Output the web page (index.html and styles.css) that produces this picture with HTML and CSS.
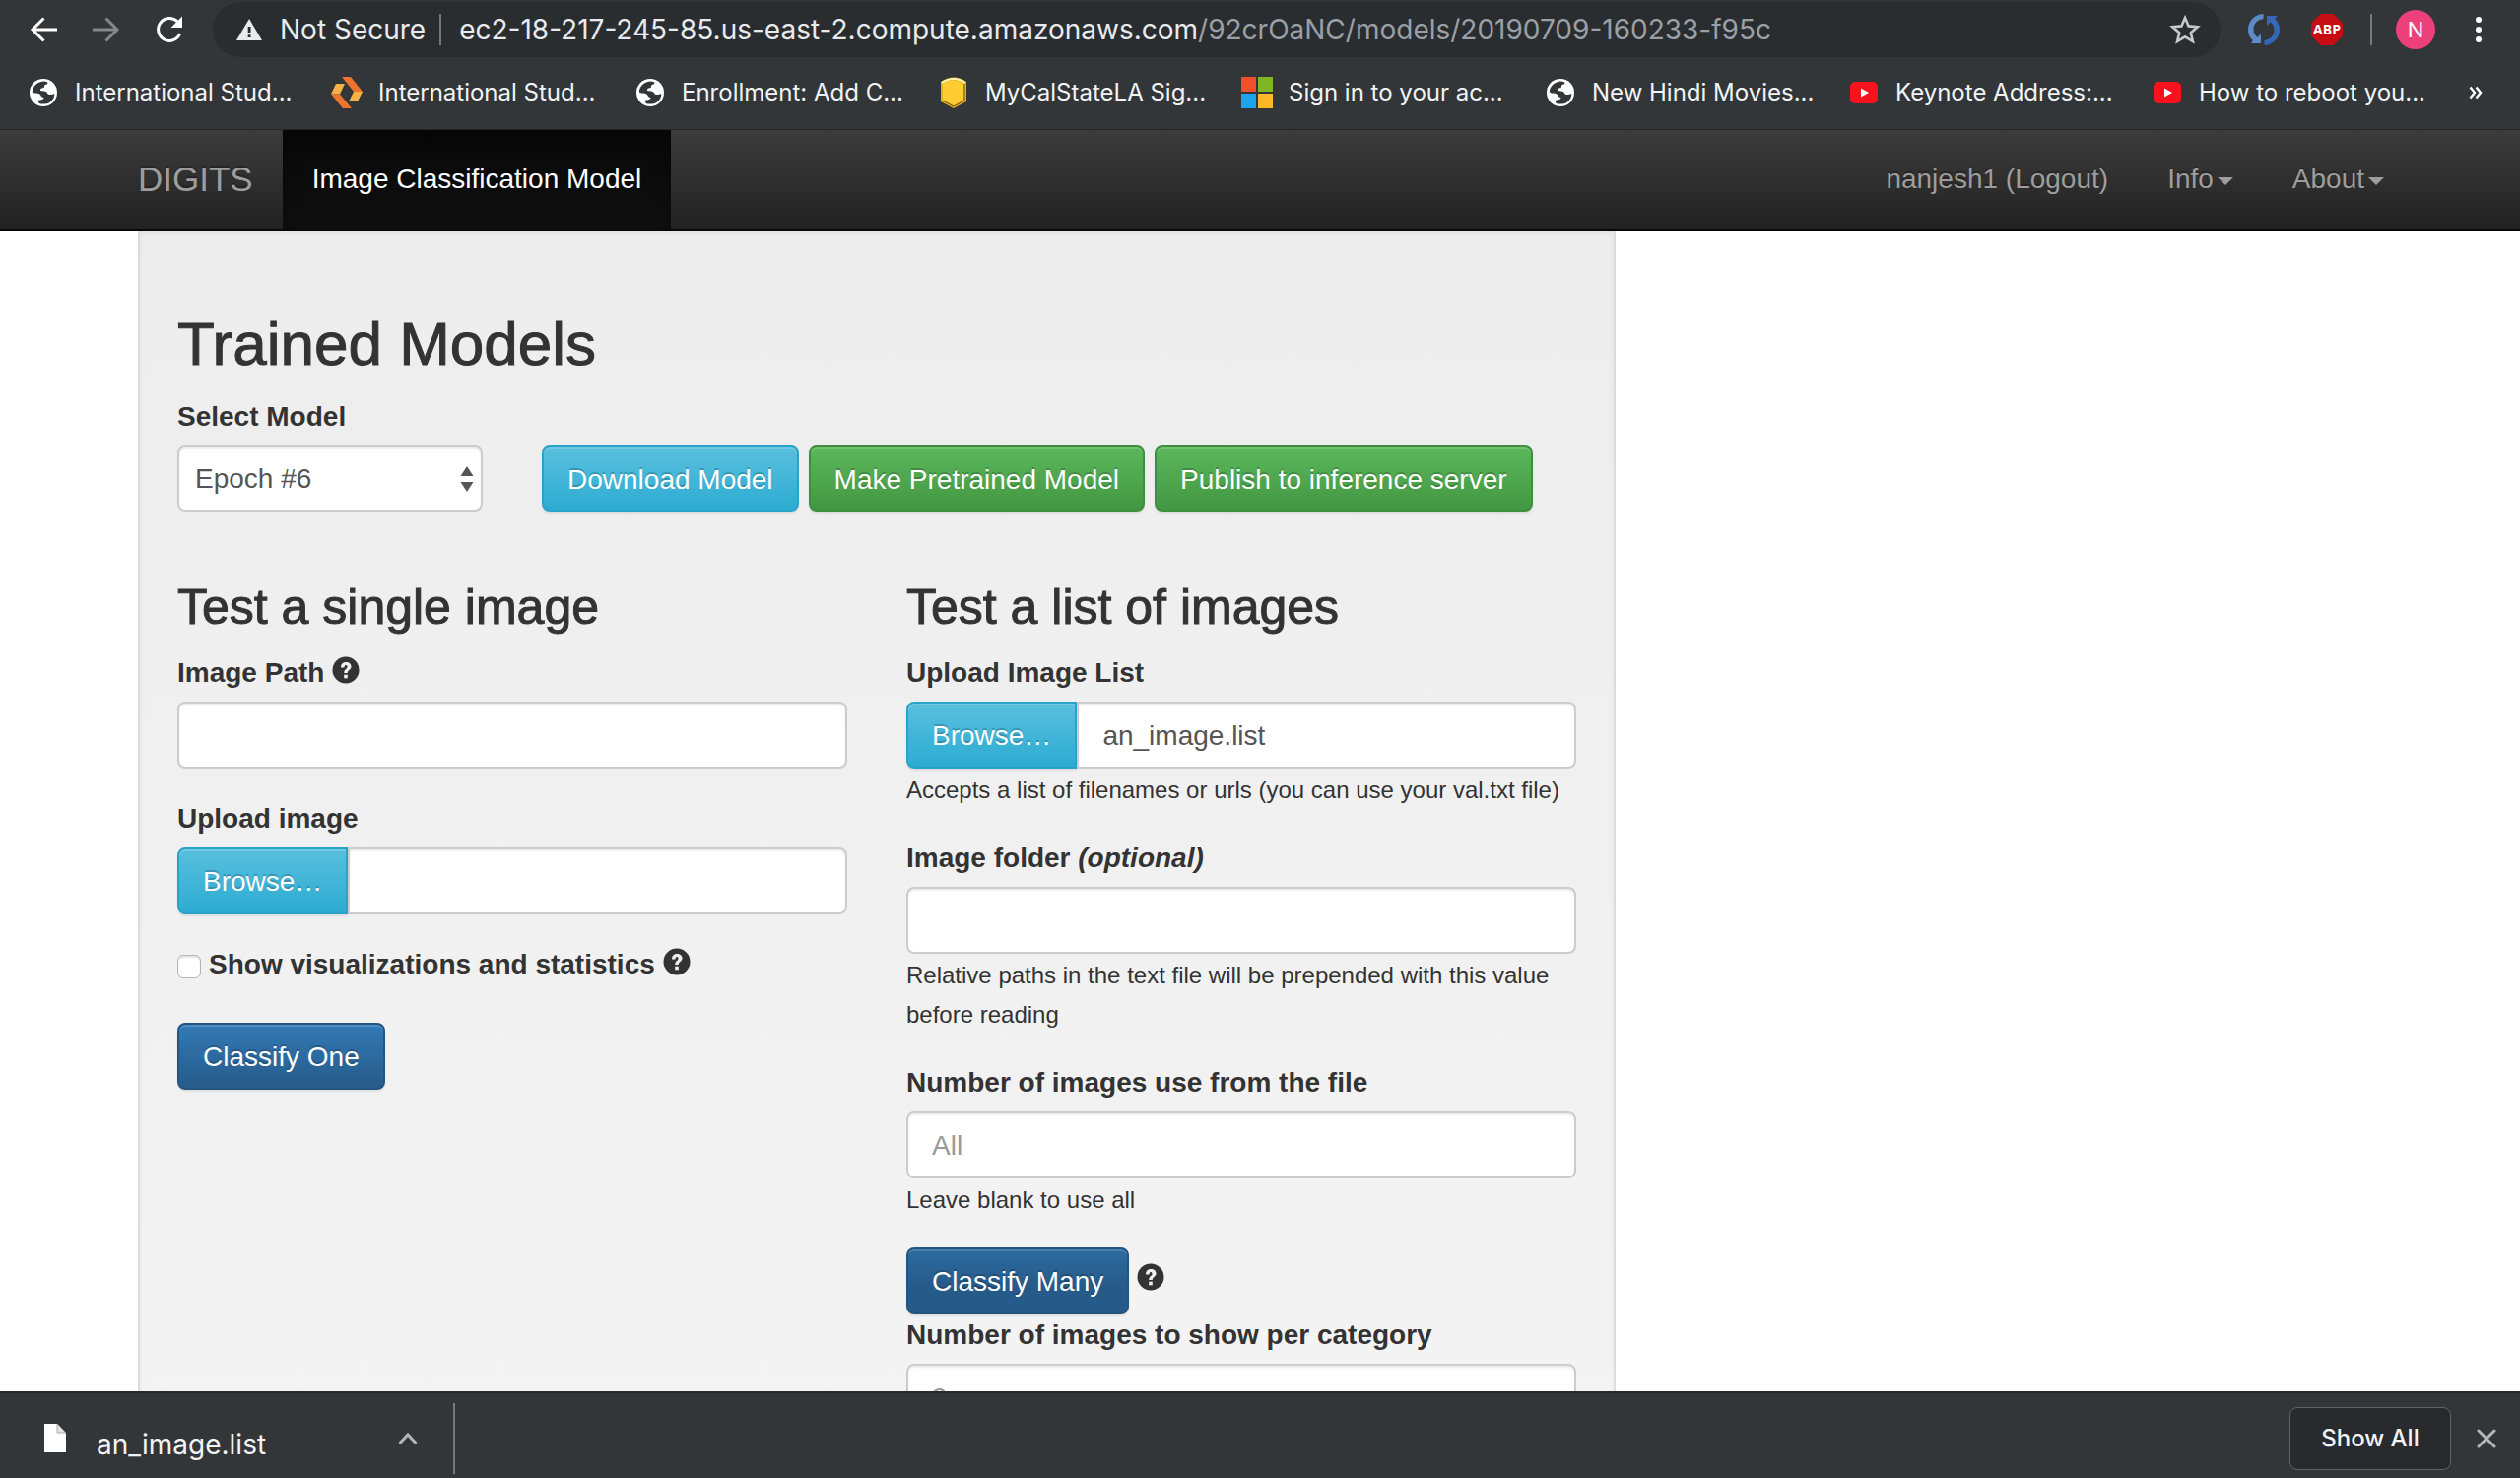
FILE: index.html
```html
<!DOCTYPE html>
<html lang="en">
<head>
<meta charset="utf-8">
<title>DIGITS - Image Classification Model</title>
<link rel="stylesheet" href="styles.css">
</head>
<body>
<svg class="sprite" aria-hidden="true">
  <symbol id="globe" viewBox="0 0 32 32">
    <circle cx="16" cy="16" r="14" fill="#fff"/>
    <path fill="#323639" d="M17 4.500 C10 4.500 5 9.500 4.800 15.500 C8 17.500 11 16 13 18 C13.500 20 15 21 16.500 21 C16.500 23 13.500 23.500 11.500 23.500 C10.500 24.500 11 26 12 27 C14 28 20 27.800 22.500 26 C26 23.500 27.500 20 27.300 17 C24.500 18.500 21 18.500 20 16.500 C19.500 14.500 16.500 14.500 13 14 C12.800 11.500 14.500 11.500 16.500 11 C17.500 10 16.500 8.500 18 8 C20 7.500 21 6.500 20 5.200 Z"/>
  </symbol>
  <symbol id="youtube" viewBox="0 0 32 32">
    <rect x="2" y="5" width="28" height="22" rx="5" fill="#f8121d"/>
    <path d="M13 11.500 L21 16 L13 20.500 Z" fill="#fff"/>
  </symbol>
  <symbol id="help" viewBox="0 0 28 28">
    <circle cx="14" cy="14" r="13.500" fill="#333"/>
    <path d="M9 11.500 C9 7.500 11.500 6 14.200 6 C17.500 6 19.500 8 19.500 10.500 C19.500 14 15.700 13.800 15.700 17 L12.200 17 C12.200 13 15.500 13.200 15.500 10.800 C15.500 9.500 14.900 9 14 9 C12.900 9 12.500 10 12.500 11.500 Z" fill="#f0f0f0"/>
    <rect x="12.200" y="18.700" width="3.600" height="3.600" fill="#f0f0f0"/>
  </symbol>
</svg>

<header class="browser">
  <div class="toolbar">
    <button class="tool" aria-label="Back"><svg width="32" height="32" viewBox="0 0 32 32" fill="none" stroke="#fff" stroke-width="3"><path d="M30 16H5M16.500 4.500L5 16l11.500 11.500"/></svg></button>
    <button class="tool" aria-label="Forward"><svg width="32" height="32" viewBox="0 0 32 32" fill="none" stroke="#85888a" stroke-width="3"><path d="M2 16h25M15.500 4.500L27 16 15.500 27.500"/></svg></button>
    <button class="tool" aria-label="Reload"><svg width="32" height="32" viewBox="0 0 32 32"><path d="M24 7.800A11.400 11.400 0 1 0 26.700 20" fill="none" stroke="#fff" stroke-width="3"/><path d="M29 2.500V14H17.500Z" fill="#fff"/></svg></button>
    <div class="omnibox">
      <svg width="26" height="24" viewBox="0 0 26 24"><path d="M13 1L26 23H0Z" fill="#e8eaed"/><path d="M11.700 9h2.800v6h-2.800zM11.700 17.200h2.800v2.800h-2.800z" fill="#292d30"/></svg>
      <span class="security">Not Secure</span>
      <span class="rule"></span>
      <span class="url">ec2-18-217-245-85.us-east-2.compute.amazonaws.com<span class="path">/92crOaNC/models/20190709-160233-f95c</span></span>
      <button class="tool" aria-label="Bookmark"><svg width="32" height="32" viewBox="0 0 32 32"><path d="M16 4l3.600 8.400 9.100.8-6.900 6 2.100 8.900L16 23.300l-7.900 4.800 2.100-8.900-6.900-6 9.100-.8Z" fill="none" stroke="#c6c8ca" stroke-width="2.600"/></svg></button>
    </div>
    <button class="tool" aria-label="Sync"><svg width="32" height="32" viewBox="0 0 32 32"><path d="M15.500 0C6 .5 0 8 0 16c0 5 2 8.500 4.800 11L3 30h10V20.500L9.500 24C7 22 5.500 19 5.500 15.500 5.500 10 9.500 6 15.500 5Z" fill="#5d8bc8"/><path d="M16.500 32C26 31.500 32 24 32 16c0-5-2-8.500-4.800-11L30 2H19V12l3.500-3.500C25 10 26.500 13 26.500 16.500 26.500 22 22.500 26 16.500 27Z" fill="#3467b6"/></svg></button>
    <button class="tool abp" aria-label="Adblock Plus"><svg width="32" height="32" viewBox="0 0 32 32"><path d="M9.500 0h13L32 9.500v13L22.500 32h-13L0 22.500v-13Z" fill="#c70d14"/><text x="16" y="21" text-anchor="middle" class="abp-text">ABP</text></svg></button>
    <span class="rule"></span>
    <button class="avatar">N</button>
    <button class="tool" aria-label="Menu"><svg width="32" height="32" viewBox="0 0 32 32" fill="#fff"><circle cx="16" cy="6" r="3"/><circle cx="16" cy="16" r="3"/><circle cx="16" cy="26" r="3"/></svg></button>
  </div>
  <nav class="bookmarks">
    <a href="#"><svg width="32" height="32"><use href="#globe"/></svg>International Stud...</a>
    <a href="#"><svg width="32" height="32" viewBox="0 0 32 32"><path d="M11 0h9l12 15h-9Z" fill="#ee7430"/><path d="M23 15h9l-5 10h-9Z" fill="#f6b145"/><path d="M5 7h9L9 17.500H0Z" fill="#f6b145"/><path d="M0 17.500h9L21 32h-9Z" fill="#ee7430"/></svg>International Stud...</a>
    <a href="#"><svg width="32" height="32"><use href="#globe"/></svg>Enrollment: Add C...</a>
    <a href="#"><svg width="32" height="32" viewBox="0 0 32 32"><path d="M3 5Q16-4 29 5v20L16 32 3 25Z" fill="#e5b31c"/><path d="M4 6Q16-2 28 6" fill="none" stroke="#fff0b5" stroke-width="2"/><path d="M5 24l11 6 11-6V7" fill="none" stroke="#684f12" stroke-width="1"/><path d="M5 7Q16 0 26 7v16l-10 6L5 23Z" fill="#ffcc33"/></svg>MyCalStateLA Sig...</a>
    <a href="#"><svg width="32" height="32" viewBox="0 0 32 32"><path d="M0 0h15v15H0z" fill="#f1502f"/><path d="M17 0h15v15H17z" fill="#80b622"/><path d="M0 17h15v15H0z" fill="#1ba5ee"/><path d="M17 17h15v15H17z" fill="#fdb829"/></svg>Sign in to your ac...</a>
    <a href="#"><svg width="32" height="32"><use href="#globe"/></svg>New Hindi Movies...</a>
    <a href="#"><svg width="32" height="32"><use href="#youtube"/></svg>Keynote Address:...</a>
    <a href="#"><svg width="32" height="32"><use href="#youtube"/></svg>How to reboot you...</a>
    <button class="overflow" aria-label="More bookmarks"><svg width="14" height="14" viewBox="0 0 14 14" fill="none" stroke="#fff" stroke-width="2.400"><path d="M1.500 1.500L6 7l-4.500 5.500M7.500 1.500L12 7l-4.500 5.500"/></svg></button>
  </nav>
</header>

<nav class="navbar">
  <a class="brand" href="#">DIGITS</a>
  <a class="active" href="#">Image Classification Model</a>
  <a class="push" href="#">nanjesh1 (Logout)</a>
  <a href="#">Info<span class="caret"></span></a>
  <a href="#">About<span class="caret"></span></a>
</nav>

<main class="page">
  <form class="well">
    <h2>Trained Models</h2>
    <label for="epoch">Select Model</label>
    <div class="model-row">
      <div class="select-wrap">
        <select id="epoch" class="control"><option>Epoch #6</option></select>
        <svg class="arrows" width="14" height="28" viewBox="0 0 14 28" fill="#555"><path d="M7 1l6.500 10H.5zM7 27L.5 17h13z"/></svg>
      </div>
      <div class="buttons">
        <button type="button" class="btn info">Download Model</button>
        <button type="button" class="btn success">Make Pretrained Model</button>
        <button type="button" class="btn success">Publish to inference server</button>
      </div>
    </div>
    <div class="columns">
      <section>
        <h3>Test a single image</h3>
        <div class="group">
          <label for="path">Image Path <svg class="help" width="28" height="28"><use href="#help"/></svg></label>
          <input id="path" class="control" type="text">
        </div>
        <div class="group">
          <label for="upload">Upload image</label>
          <div class="file"><button type="button" class="btn info">Browse…</button><input id="upload" class="control" type="text" readonly></div>
        </div>
        <div class="group">
          <label class="check" for="vis"><input id="vis" type="checkbox"><span>Show visualizations and statistics <svg class="help" width="28" height="28"><use href="#help"/></svg></span></label>
        </div>
        <button type="button" class="btn primary">Classify One</button>
      </section>
      <section>
        <h3>Test a list of images</h3>
        <div class="group">
          <label for="list">Upload Image List</label>
          <div class="file"><button type="button" class="btn info">Browse…</button><input id="list" class="control" type="text" value="an_image.list" readonly></div>
          <small>Accepts a list of filenames or urls (you can use your val.txt file)</small>
        </div>
        <div class="group">
          <label for="folder">Image folder <i>(optional)</i></label>
          <input id="folder" class="control" type="text">
          <small>Relative paths in the text file will be prepended with this value before reading</small>
        </div>
        <div class="group">
          <label for="count">Number of images use from the file</label>
          <input id="count" class="control" type="text" placeholder="All">
          <small>Leave blank to use all</small>
        </div>
        <div class="many"><button type="button" class="btn primary hover">Classify Many</button><svg class="help" width="28" height="28"><use href="#help"/></svg></div>
        <div class="group">
          <label for="per">Number of images to show per category</label>
          <input id="per" class="control" type="text" placeholder="9">
        </div>
      </section>
    </div>
  </form>
</main>

<footer class="downloads">
  <svg width="24" height="32" viewBox="0 0 24 32"><path d="M1 1h13l9 10v19H1Z" fill="#fff"/><path d="M14 1v9h9" fill="#e4e4e4" stroke="#aaa"/></svg>
  <span class="filename">an_image.list</span>
  <button class="tool" aria-label="File options"><svg width="20" height="14" viewBox="0 0 20 14" fill="none" stroke="#b5b7b8" stroke-width="3"><path d="M1.500 12L10 3l8.500 9"/></svg></button>
  <span class="rule"></span>
  <button class="show-all">Show All</button>
  <button class="tool" aria-label="Close"><svg width="20" height="20" viewBox="0 0 20 20" stroke="#b5b7b8" stroke-width="3" stroke-linecap="round"><path d="M2 2l16 16M18 2L2 18"/></svg></button>
</footer>
</body>
</html>
```
FILE: styles.css
```css
* { box-sizing: border-box; }
body {
  margin: 0;
  height: 100vh;
  overflow: hidden;
  display: flex;
  flex-direction: column;
  background: #fff;
  color: #333;
  font: 28px/40px "Liberation Sans", Arial, sans-serif;
}
a { text-decoration: none; }
button, input, select { font: inherit; margin: 0; }
svg { flex: none; display: block; }
.sprite { position: absolute; width: 0; height: 0; }

/* Browser chrome */
.browser {
  flex: none;
  background: #323639;
  border-bottom: 1px solid #262626;
  font-family: Inter, Roboto, sans-serif;
  color: #e8eaed;
}
.toolbar { display: flex; align-items: center; height: 60px; padding: 0 26px 0 28px; gap: 32px; }
.tool { flex: none; padding: 0; border: 0; background: none; }
.omnibox {
  flex: 1;
  min-width: 0;
  height: 56px;
  margin: 0 -4px;
  padding: 0 20px 0 24px;
  border-radius: 28px;
  background: #292d30;
  display: flex;
  align-items: center;
  font-size: 28px;
}
.security { margin-left: 18px; }
.rule { flex: none; width: 2px; height: 32px; background: #76797b; }
.omnibox .rule { margin: 0 18px 0 14px; }
.url { flex: 1; white-space: nowrap; overflow: hidden; }
.path { color: #9aa0a6; }
.abp { margin-right: -4px; }
.abp-text { font: bold 14px "Open Sans", sans-serif; fill: #fff; }
.avatar {
  flex: none;
  width: 40px;
  height: 40px;
  margin: 0 -4px 0 -8px;
  padding: 0;
  border: 0;
  border-radius: 50%;
  background: #ec407a;
  color: #fff;
  font-size: 22px;
}
.bookmarks { display: flex; align-items: center; height: 71px; padding: 0 38px 4px 28px; }
.bookmarks a {
  flex: 0 0 308px;
  display: flex;
  align-items: center;
  gap: 16px;
  color: #f1f3f4;
  font-size: 24px;
  white-space: nowrap;
}
.overflow { margin-left: auto; padding: 0; border: 0; background: none; }

/* Site navigation */
.navbar {
  flex: none;
  display: flex;
  padding: 0 108px 0 110px;
  background: linear-gradient(#3c3c3c, #222);
  border-bottom: 2px solid #080808;
}
.navbar a { padding: 30px; color: #9d9d9d; text-shadow: 0 -2px 0 rgba(0, 0, 0, .25); }
.navbar .brand { font-size: 35px; }
.navbar .active { color: #fff; background: linear-gradient(#080808, #0f0f0f); box-shadow: inset 0 6px 18px rgba(0, 0, 0, .25); }
.push { margin-left: auto; }
.caret {
  display: inline-block;
  margin-left: 4px;
  vertical-align: middle;
  border: 8px solid transparent;
  border-top-color: #9d9d9d;
  border-bottom: 0;
}

/* Model page */
.page { flex: 1; min-height: 0; overflow: hidden; padding: 0 140px; }
.well {
  max-width: 1500px;
  min-height: 100%;
  padding: 82px 38px 38px;
  border: 2px solid #dcdcdc;
  border-width: 0 2px;
  background: linear-gradient(#ededed, #f4f4f4);
  box-shadow: inset 0 2px 6px rgba(0, 0, 0, .05);
}
h2, h3 { margin: 0 0 20px; font-weight: 500; -webkit-text-stroke: 1px #333; }
h2 { font-size: 62px; line-height: 66px; }
h3 { font-size: 50px; line-height: 52px; }
label { display: block; padding-top: 1px; margin-bottom: 9px; font-weight: bold; }
.control {
  display: block;
  width: 100%;
  height: 68px;
  padding: 13px 24px 11px;
  border: 2px solid #ccc;
  border-radius: 8px;
  background: #fff;
  color: #555;
  box-shadow: inset 0 2px 2px rgba(0, 0, 0, .075);
}
.control::placeholder { color: #999; opacity: 1; }
.btn {
  height: 68px;
  padding: 13px 24px 11px;
  border: 2px solid;
  border-radius: 8px;
  color: #fff;
  white-space: nowrap;
  text-shadow: 0 -2px 0 rgba(0, 0, 0, .2);
  box-shadow: inset 0 2px 0 rgba(255, 255, 255, .15), 0 2px 2px rgba(0, 0, 0, .075);
}
.info { background: linear-gradient(#5bc0de, #2aabd2) border-box; border-color: #28a4c9; }
.success { background: linear-gradient(#5cb85c, #419641) border-box; border-color: #3e8f3e; }
.primary { background: linear-gradient(#337ab7, #265a88) border-box; border-color: #245580; }
.primary.hover { background: linear-gradient(#2d6ca2, #265a88 60%) border-box; }
.model-row { display: flex; gap: 60px; }
.select-wrap { position: relative; flex: 0 0 310px; }
.select-wrap .control { padding: 0 16px; appearance: none; }
.arrows { position: absolute; right: 9px; top: 20px; pointer-events: none; }
.buttons { display: flex; gap: 10px; }
.columns { display: grid; grid-template-columns: 1fr 1fr; gap: 60px; margin-top: 70px; }
.group { margin-bottom: 30px; }
.help { display: inline-block; vertical-align: -2px; }
.file { display: flex; }
.file .btn { border-radius: 8px 0 0 8px; }
.file .control { flex: 1; min-width: 0; border-radius: 0 8px 8px 0; }
.check { display: flex; align-items: center; gap: 8px; margin-bottom: 39px; }
.check input {
  appearance: none;
  width: 24px;
  height: 24px;
  margin-top: 4px;
  border: 1px solid #b4b4b4;
  border-radius: 6px;
  background: #fff;
  box-shadow: inset 0 2px 2px rgba(0, 0, 0, .1);
}
small { display: block; padding-top: 2px; margin-bottom: -2px; font-size: 24px; line-height: 40px; }
.many { display: flex; align-items: center; gap: 8px; }
.many .help { margin-bottom: 8px; }

/* Download shelf */
.downloads {
  flex: none;
  display: flex;
  align-items: center;
  height: 88px;
  padding: 6px 24px 0 44px;
  background: #323639;
  border-top: 2px solid #27292b;
  color: #f1f3f4;
  font-family: Inter, Roboto, sans-serif;
}
.filename { flex: 0 0 306px; margin-left: 30px; padding-top: 12px; font-size: 28px; }
.downloads .rule { height: 72px; margin-left: 36px; }
.show-all {
  width: 164px;
  height: 64px;
  margin: 0 26px 0 auto;
  padding: 0;
  border: 1px solid #5f6164;
  border-radius: 8px;
  background: #292a2d;
  color: #f1f3f4;
  font-size: 24px;
  font-weight: 500;
}
```
